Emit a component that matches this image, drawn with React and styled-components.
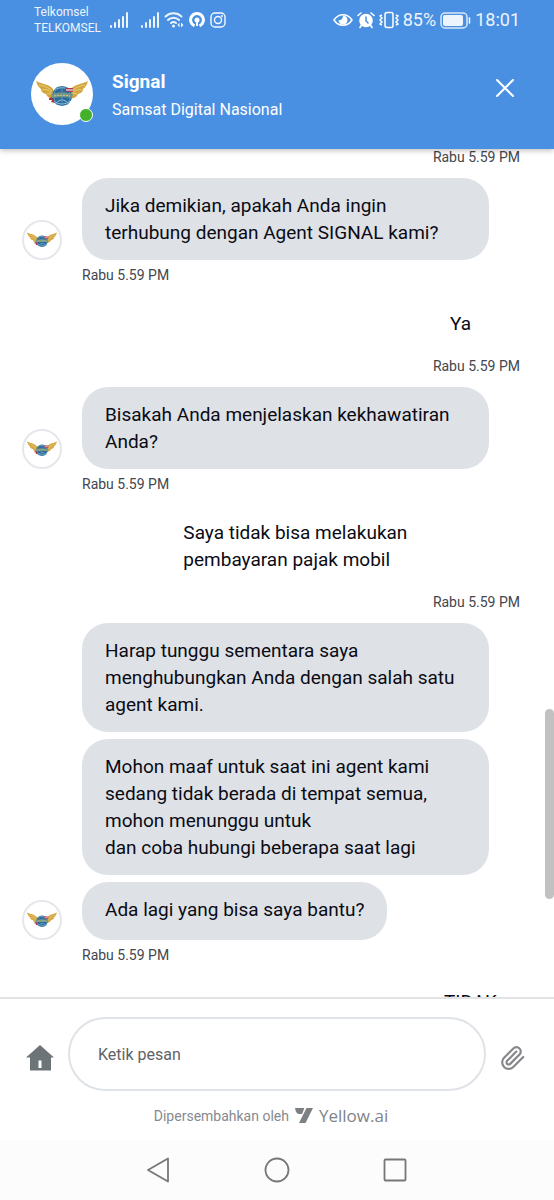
import React from 'react';
import styled, { createGlobalStyle } from 'styled-components';


const GlobalStyle = createGlobalStyle`
  * {
    box-sizing: border-box;
  }
  body {
    margin: 0;
    background-color: #fff;
    font-family: Roboto, "Noto Sans", sans-serif;
  }
  button, input {
    font-family: inherit;
  }
`

const Page = styled.div`
  width: 100%;
  height: 100vh;
  display: flex;
  flex-direction: column;
`

const Header = styled.header`
  background-color: #4a90e2;
  color: #fff;
  box-shadow: 0 1px 6px rgba(0,0,0,0.3);
  z-index: 2;
`

const StatusBar = styled.div`
  height: 40px;
  padding: 0 34px;
  display: flex;
  justify-content: space-between;
  align-items: center;
`

const StatusGroup = styled.div`
  display: flex;
  align-items: center;
  gap: ${props => props.$gap};
`

const Carriers = styled.div`
  width: 72px;
  font-size: 12px;
  line-height: 16px;
  opacity: 0.9;
`

const StatusText = styled.span`
  font-size: 18px;
  line-height: 20px;
  opacity: 0.9;
`

const Profile = styled.div`
  display: flex;
  align-items: center;
  padding: 23px 36px 24px 31px;
`

const ProfilePic = styled.div`
  position: relative;
  width: 62px;
  height: 62px;
  border-radius: 50%;
  background-color: #fff;
  display: flex;
  justify-content: center;
  align-items: center;
`

const OnlineDot = styled.span`
  position: absolute;
  right: 0;
  bottom: 3px;
  width: 14px;
  height: 14px;
  border-radius: 50%;
  border: 1px solid #fff;
  background-color: #43b02a;
`

const ProfileText = styled.div`
  flex: 1;
  padding: 3px 0 0 19px;
`

const BotName = styled.h1`
  margin: 0;
  font-size: 19px;
  line-height: 28px;
  font-weight: 700;
`

const BotDesc = styled.p`
  margin: 0;
  font-size: 16px;
  line-height: 28px;
`

const CloseButton = styled.button`
  display: flex;
  align-self: flex-start;
  margin-top: 13px;
  padding: 2px;
  border: none;
  background: none;
  color: #fff;
`

const ChatWrap = styled.div`
  position: relative;
  flex: 1;
  min-height: 0;
  display: flex;
`

const Chat = styled.main`
  flex: 1;
  overflow-y: auto;
  scrollbar-width: none;
  padding: 0 34px 14px 22px;
`

const ScrollThumb = styled.div`
  position: absolute;
  right: 0;
  top: 66%;
  width: 9px;
  height: 190px;
  border-radius: 5px;
  background-color: #c1c1c1;
`

const BotRow = styled.div`
  display: grid;
  grid-template-columns: 40px 1fr;
  column-gap: 20px;
  align-items: end;
`

const BubbleList = styled.div`
  display: flex;
  flex-direction: column;
  align-items: flex-start;
  gap: 7px;
  padding-right: 31px;
`

const Bubble = styled.div`
  min-height: 58px;
  padding: 14px 23px;
  border-radius: 26px;
  background-color: #dee2e7;
  color: #0b0b14;
  font-size: 19px;
  line-height: 27px;
  white-space: pre-line;
`

const Avatar = styled.div`
  width: 40px;
  height: 40px;
  border-radius: 50%;
  border: 2px solid #e6e7ec;
  background-color: #fff;
  display: flex;
  justify-content: center;
  align-items: center;
`

const Time = styled.time`
  display: block;
  margin: 7px 0 13px;
  font-size: 14px;
  line-height: 16px;
  color: #43464d;
`

const BotTime = styled(Time)`
  grid-column: 2;
`

const UserRow = styled.div`
  display: flex;
  flex-direction: column;
  align-items: flex-end;
`

const TopTime = styled(UserRow)`
  margin-top: -7px;
`

const UserBubble = styled.div`
  max-width: 67%;
  margin-right: 26px;
  padding: 14px 23px;
  color: #0b0b14;
  font-size: 19px;
  line-height: 27px;
`

const QuickReply = styled.button`
  padding: 12px 23px;
  border: none;
  background: none;
  color: #0b0b14;
  font-size: 19px;
  line-height: 27px;
`

const Footer = styled.footer`
  border-top: 2px solid #e1e3e5;
`

const InputRow = styled.form`
  display: flex;
  align-items: center;
  gap: 14px;
  padding: 18px 28px 0 26px;
`

const MessageInput = styled.input`
  flex: 1;
  min-width: 0;
  height: 74px;
  padding: 0 28px;
  border: 2px solid #dfe3e8;
  border-radius: 37px;
  background-color: #fff;
  font-size: 16px;
  color: #0b0b14;
  outline: none;

  &::placeholder {
    color: #5f6368;
    opacity: 1;
  }
`

const IconButton = styled.button`
  display: flex;
  padding: 8px 0 0;
  border: none;
  background: none;
`

const Powered = styled.div`
  display: flex;
  justify-content: center;
  align-items: center;
  gap: 6px;
  height: 49px;
  padding-right: 12px;
  font-size: 14px;
  color: #868a8e;
`

const PoweredLink = styled.a`
  display: flex;
  align-items: center;
  gap: 6px;
  color: #808488;
  font-family: "Open Sans", sans-serif;
  font-size: 17px;
  text-decoration: none;
`

const NavBar = styled.nav`
  display: flex;
  justify-content: center;
  align-items: center;
  gap: 92px;
  height: 60px;
  background-color: #fcfcfc;
`

const NavButton = styled.button`
  display: flex;
  padding: 0;
  border: none;
  background: none;
`

// gold wings round the globe
function Emblem({ width }) {
  return (
    <svg width={width} viewBox="0 0 52 28" aria-hidden="true">
      <path d="M0 1C5 4 13 4 17 9L19 16 18 19C12 18 11 16 10 14 6 13 5 11 5 9 2 7 1 4 0 1Z" fill="#d3a53c" />
      <path d="M52 1C47 4 39 4 35 9L33 16 34 19C40 18 41 16 42 14 46 13 47 11 47 9 50 7 51 4 52 1Z" fill="#d3a53c" />
      <path d="M3 5c5 1 9 2 13 6M6 10c4-1 7 0 11 4M11 14c3-1 5 0 7 3M49 5c-5 1-9 2-13 6M46 10c-4-1-7 0-11 4M41 14c-3-1-5 0-7 3" stroke="#efd58b" strokeWidth="0.8" fill="none" />
      <path d="M13 18l6-2v7l-4-1 1-2-3 0Z" fill="#b5323c" />
      <circle cx="26" cy="16" r="10" fill="#2b699b" />
      <path d="M19 10c4-3 10-3 14 0M18 21c5 4 11 4 16 0M20 23c4-4 8-4 12 0" stroke="#8fc1d8" strokeWidth="1" fill="none" />
      <path d="M26 6v20M21 7c-4 6-4 12 0 18M31 7c4 6 4 12 0 18" stroke="#5e9dc0" strokeWidth="0.8" fill="none" />
      <path d="M29 8h8v4h-6Z" fill="#a63b52" />
      <path d="M30 10h7" stroke="#fff" strokeWidth="1" />
      <path d="M15 14c7-2 15-2 22 0l-1 4c-6-1-13-1-20 0Z" fill="#719488" />
      <path d="M18 16c5-1 11-1 16 0" stroke="#d8cc91" strokeWidth="1" strokeDasharray="2 1" fill="none" />
    </svg>
  );
}

function SignalBars() {
  return (
    <svg width="18" height="18" viewBox="0 0 18 18" fill="#fff" opacity="0.9" aria-hidden="true">
      <rect x="0" y="14" width="2" height="3" rx="1" />
      <rect x="4" y="11" width="2" height="6" rx="1" />
      <rect x="8" y="8" width="2" height="9" rx="1" />
      <rect x="12" y="5" width="2" height="12" rx="1" />
      <rect x="16" y="1" width="2" height="16" rx="1" />
    </svg>
  );
}

function WifiIcon() {
  return (
    <svg width="20" height="18" viewBox="0 0 20 18" fill="none" stroke="#fff" strokeWidth="2" strokeLinecap="round" opacity="0.9" aria-hidden="true">
      <path d="M1.500 5.500C6 1.300 13 1.300 17.500 5.500M4 9c3-3 8-3 11 0M7 12c1.500-1.300 3.500-1.300 5 0" />
      <circle cx="9.500" cy="15" r="1.500" fill="#fff" stroke="none" />
      <path d="M15.500 11.500l-2 2.500 2 2.500ZM17 11.500l2.500 2.500-2.500 2.500Z" fill="#fff" stroke="none" />
    </svg>
  );
}

function RingIcon() {
  return (
    <svg width="16" height="16" viewBox="0 0 16 16" fill="none" aria-hidden="true">
      <path d="M5.500 13.800A6.400 6.400 0 1 1 10.500 13.800" stroke="#fff" strokeWidth="3" />
      <circle cx="8" cy="8" r="2.500" fill="#fff" />
      <path d="M7 9h2v5h-2Z" fill="#fff" />
    </svg>
  );
}

function InstagramIcon() {
  return (
    <svg width="16" height="16" viewBox="0 0 16 16" fill="none" stroke="#fff" strokeWidth="1.400" opacity="0.95" aria-hidden="true">
      <rect x="1" y="1" width="14" height="14" rx="4" />
      <circle cx="8" cy="8" r="3.500" />
      <circle cx="12" cy="4" r="1" fill="#fff" stroke="none" />
    </svg>
  );
}

function EyeIcon() {
  return (
    <svg width="20" height="16" viewBox="0 0 20 16" fill="none" aria-hidden="true">
      <path d="M1 8c4.500-7 13.500-7 18 0-4.500 7-13.500 7-18 0Z" stroke="#fff" strokeWidth="1.500" />
      <path d="M10 3.500A4.500 4.500 0 1 1 5.500 8c2 1 4.500-1 4.500-4.500Z" fill="#fff" />
    </svg>
  );
}

function AlarmIcon() {
  return (
    <svg width="18" height="18" viewBox="0 0 18 18" fill="none" aria-hidden="true">
      <circle cx="9" cy="9.500" r="6.800" fill="#fff" />
      <path d="M1 4.500l3-2.500M17 4.500l-3-2.500M4.500 14l-1.500 2.500M13.500 14l1.500 2.500" stroke="#fff" strokeWidth="1.600" strokeLinecap="round" />
      <path d="M9 5.500v4.500l2.500 2.500" stroke="#4a90e2" strokeWidth="1.500" />
    </svg>
  );
}

function VibrateIcon() {
  return (
    <svg width="20" height="18" viewBox="0 0 20 18" fill="none" stroke="#fff" strokeWidth="1.500" aria-hidden="true">
      <rect x="6" y="1.500" width="8" height="15" rx="2" />
      <path d="M3 4l-2 1 2 2-2 2 2 2-2 2 2 1M17 4l2 1-2 2 2 2-2 2 2 2-2 1" />
    </svg>
  );
}

function BatteryIcon() {
  return (
    <svg width="31" height="18" viewBox="0 0 31 18" fill="none" aria-hidden="true">
      <rect x="1" y="2" width="26" height="15" rx="4" stroke="#fff" strokeWidth="1.500" opacity="0.8" />
      <rect x="3" y="4" width="20" height="11" rx="2" fill="#fff" opacity="0.9" />
      <path d="M29.500 7v5" stroke="#fff" strokeWidth="1.500" strokeLinecap="round" />
    </svg>
  );
}

function BotMessages({ messages, time }) {
  return (
    <BotRow>
      <Avatar><Emblem width={30} /></Avatar>
      <BubbleList>
        {messages.map(text => <Bubble key={text}>{text}</Bubble>)}
      </BubbleList>
      <BotTime>{time}</BotTime>
    </BotRow>
  );
}

function UserMessage({ text, time }) {
  return (
    <UserRow>
      <UserBubble>{text}</UserBubble>
      <Time>{time}</Time>
    </UserRow>
  );
}

function App() {
  const time = 'Rabu 5.59 PM';

  return (
    <Page>
      <GlobalStyle />

      <Header>
        <StatusBar>
          <StatusGroup $gap="4px">
            <Carriers>Telkomsel<br />TELKOMSEL</Carriers>
            <StatusGroup $gap="13px">
              <SignalBars />
              <StatusGroup $gap="5px">
                <SignalBars />
                <WifiIcon />
                <RingIcon />
                <InstagramIcon />
              </StatusGroup>
            </StatusGroup>
          </StatusGroup>
          <StatusGroup $gap="4px">
            <EyeIcon />
            <AlarmIcon />
            <VibrateIcon />
            <StatusText>85%</StatusText>
            <BatteryIcon />
            <StatusText>18:01</StatusText>
          </StatusGroup>
        </StatusBar>

        <Profile>
          <ProfilePic>
            <Emblem width={52} />
            <OnlineDot />
          </ProfilePic>
          <ProfileText>
            <BotName>Signal</BotName>
            <BotDesc>Samsat Digital Nasional</BotDesc>
          </ProfileText>
          <CloseButton type="button" aria-label="Tutup">
            <svg width="22" height="20" viewBox="0 0 22 20" fill="none" stroke="#fff" strokeWidth="2" strokeLinecap="round">
              <path d="M3 2l16 16M19 2L3 18" />
            </svg>
          </CloseButton>
        </Profile>
      </Header>

      <ChatWrap>
        <Chat>
          <TopTime><Time>{time}</Time></TopTime>
          <BotMessages
            messages={['Jika demikian, apakah Anda ingin terhubung dengan Agent SIGNAL kami?']}
            time={time}
          />
          <UserMessage text="Ya" time={time} />
          <BotMessages
            messages={['Bisakah Anda menjelaskan kekhawatiran Anda?']}
            time={time}
          />
          <UserMessage text="Saya tidak bisa melakukan pembayaran pajak mobil" time={time} />
          <BotMessages
            messages={[
              'Harap tunggu sementara saya menghubungkan Anda dengan salah satu agent kami.',
              'Mohon maaf untuk saat ini agent kami sedang tidak berada di tempat semua, mohon menunggu untuk\ndan coba hubungi beberapa saat lagi',
              'Ada lagi yang bisa saya bantu?',
            ]}
            time={time}
          />
          <UserRow>
            <QuickReply type="button">TIDAK</QuickReply>
          </UserRow>
        </Chat>
        <ScrollThumb />
      </ChatWrap>

      <Footer>
        <InputRow>
          <IconButton type="button" aria-label="Beranda">
            <svg width="28" height="26" viewBox="0 0 28 26" fill="#6c7478">
              <path fillRule="evenodd" d="M14 0L28 12.500H25V25.500H4V12.500H0ZM12.500 15.500v7.500h3v-7.500Z" />
            </svg>
          </IconButton>
          <MessageInput type="text" placeholder="Ketik pesan" aria-label="Ketik pesan" />
          <IconButton type="button" aria-label="Lampirkan berkas">
            <svg width="26" height="28" viewBox="0 0 24 24" fill="none" stroke="#85878a" strokeWidth="2" strokeLinecap="round" strokeLinejoin="round">
              <path d="M21.440 11.050l-9.190 9.190a6 6 0 0 1-8.490-8.490l8.570-8.570A4 4 0 1 1 18 8.840l-8.590 8.570a2 2 0 0 1-2.830-2.830l8.490-8.480" />
            </svg>
          </IconButton>
        </InputRow>
        <Powered>
          Dipersembahkan oleh
          <PoweredLink href="#yellow">
            <svg width="18" height="15" viewBox="0 0 18 15" fill="#7d8083" aria-hidden="true">
              <path d="M0 0h9.500L7.500 6H4Q1 6 0 0Z" />
              <path d="M11.500 0H18l-7.500 15H4Z" />
              <path d="M10 0L7.500 6" stroke="#fff" strokeWidth="0.800" />
            </svg>
            Yellow.ai
          </PoweredLink>
        </Powered>
      </Footer>

      <NavBar>
        <NavButton type="button" aria-label="Kembali">
          <svg width="26" height="26" viewBox="0 0 26 26" fill="none" stroke="#777" strokeWidth="1.800" strokeLinejoin="round">
            <path d="M2 13L22 1.500v23Z" />
          </svg>
        </NavButton>
        <NavButton type="button" aria-label="Layar utama">
          <svg width="26" height="26" viewBox="0 0 26 26" fill="none" stroke="#777" strokeWidth="1.800">
            <circle cx="13" cy="13" r="11.500" />
          </svg>
        </NavButton>
        <NavButton type="button" aria-label="Aplikasi terbaru">
          <svg width="26" height="26" viewBox="0 0 26 26" fill="none" stroke="#777" strokeWidth="1.800">
            <rect x="2.500" y="2.500" width="21" height="21" rx="1" />
          </svg>
        </NavButton>
      </NavBar>
    </Page>
  );
}


export default App;
